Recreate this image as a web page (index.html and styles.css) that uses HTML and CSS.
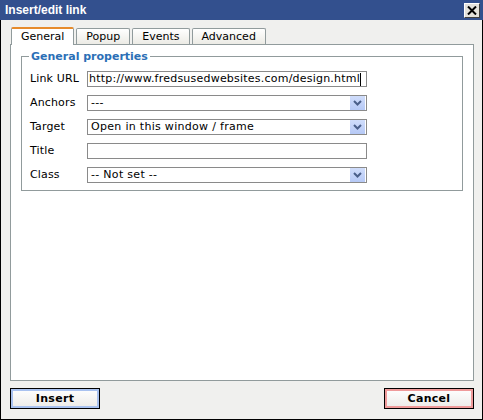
FILE: index.html
```html
<!DOCTYPE html>
<html>
<head>
<meta charset="utf-8">
<link rel="stylesheet" href="styles.css">
</head>
<body>
<div class="dialog">
  <div class="titlebar">
    <span class="title">Insert/edit link</span>
    <span class="close">
      <svg width="10" height="9" viewBox="0 0 10 9"><path d="M1 0.5 L9 8.5 M9 0.5 L1 8.5" stroke="#000" stroke-width="2"/></svg>
    </span>
  </div>
  <div class="body">
    <div class="tabs">
      <span class="tab active">General</span>
      <span class="tab">Popup</span>
      <span class="tab">Events</span>
      <span class="tab">Advanced</span>
    </div>
    <div class="panel">
      <fieldset class="props">
        <legend>General properties</legend>
        <div class="grid">
          <span class="label">Link URL</span>
          <div class="field url">http://www.fredsusedwebsites.com/design.html<span class="caret"></span></div>
          <span class="label">Anchors</span>
          <div class="field select"><span class="val">---</span><span class="arrow"><svg width="9" height="6" viewBox="0 0 9 6"><path d="M1 1 L4.5 4.5 L8 1" fill="none" stroke="#4a5f8a" stroke-width="2"/></svg></span></div>
          <span class="label">Target</span>
          <div class="field select"><span class="val">Open in this window / frame</span><span class="arrow"><svg width="9" height="6" viewBox="0 0 9 6"><path d="M1 1 L4.5 4.5 L8 1" fill="none" stroke="#4a5f8a" stroke-width="2"/></svg></span></div>
          <span class="label">Title</span>
          <div class="field"></div>
          <span class="label">Class</span>
          <div class="field select"><span class="val">-- Not set --</span><span class="arrow"><svg width="9" height="6" viewBox="0 0 9 6"><path d="M1 1 L4.5 4.5 L8 1" fill="none" stroke="#4a5f8a" stroke-width="2"/></svg></span></div>
        </div>
      </fieldset>
    </div>
    <div class="buttons">
      <span class="btn insert">Insert</span>
      <span class="btn cancel">Cancel</span>
    </div>
  </div>
</div>
</body>
</html>
```
FILE: styles.css
```css
html, body {
  margin: 0;
  padding: 0;
  background: #f0f0ee;
}
.dialog {
  width: 483px;
  height: 420px;
  display: flex;
  flex-direction: column;
  font-family: "DejaVu Sans", Verdana, sans-serif;
  font-size: 11px;
  color: #000;
}
.titlebar {
  height: 20px;
  flex: none;
  background: #33508e;
  display: flex;
  align-items: center;
  justify-content: space-between;
  padding: 0 3px 0 5px;
  box-sizing: border-box;
}
.title {
  font-family: "Liberation Sans", Arial, sans-serif;
  font-weight: bold;
  font-size: 12px;
  color: #fff;
}
.close {
  width: 16px;
  height: 15px;
  box-sizing: border-box;
  background: #e4e2dc;
  border: 1px solid;
  border-color: #fff #404040 #404040 #fff;
  display: flex;
  align-items: center;
  justify-content: center;
}
.body {
  flex: 1;
  display: flex;
  flex-direction: column;
  border: 1px solid #000;
  border-top: none;
  padding: 7px 8px 10px 9px;
  background: #f0f0ee;
}
.tabs {
  display: flex;
  align-items: flex-end;
  gap: 2px;
  height: 17px;
  position: relative;
  z-index: 1;
  padding-left: 1px;
}
.tab {
  height: 16px;
  box-sizing: border-box;
  border: 1px solid #919b9c;
  border-bottom: none;
  border-radius: 2px 2px 0 0;
  background: linear-gradient(#ffffff, #ecebe5);
  padding: 1px 9px 0 9px;
  line-height: 14px;
  color: #000;
}
.tab.active {
  height: 18px;
  margin-bottom: -1px;
  background: #fff;
  border-top: 2px solid #e68b2c;
  padding-top: 1px;
}
.panel {
  flex: 1;
  background: #fff;
  border: 1px solid #919b9c;
  padding: 5px 10px;
}
.props {
  margin: 0;
  border: 1px solid #919b9c;
  padding: 8px 7px 7px 8px;
}
.props legend {
  padding: 0 2px;
  margin-left: -1px;
  font-weight: bold;
  color: #2b6fb6;
  line-height: 13px;
}
.grid {
  display: grid;
  grid-template-columns: 57px 280px;
  grid-auto-rows: 16px;
  row-gap: 8px;
  align-items: center;
}
.label {
  line-height: 16px;
  letter-spacing: 0.15px;
}
.field {
  height: 16px;
  box-sizing: border-box;
  border: 1px solid #8a8a8a;
  background: #fff;
  padding: 0 2px;
  line-height: 14px;
  display: flex;
  align-items: center;
  white-space: nowrap;
  overflow: hidden;
}
.url {
  letter-spacing: 0.22px;
  padding-left: 1px;
}
.caret {
  display: inline-block;
  width: 1px;
  height: 13px;
  background: #000;
}
.select {
  justify-content: space-between;
  padding: 1px 1px 1px 3px;
}
.select .val {
  letter-spacing: 0.3px;
}
.arrow {
  width: 15px;
  height: 14px;
  box-sizing: border-box;
  background: linear-gradient(#d0ddfb, #b6c9f6);
  display: flex;
  align-items: center;
  justify-content: center;
}
.buttons {
  display: flex;
  justify-content: space-between;
  margin-top: 7px;
}
.btn {
  width: 90px;
  height: 21px;
  box-sizing: border-box;
  border: 1px solid #000;
  display: flex;
  align-items: center;
  justify-content: center;
  font-weight: bold;
  letter-spacing: 0.3px;
  background: linear-gradient(#ffffff, #ecebe8);
}
.insert {
  box-shadow: inset 0 0 0 2px #a9c2f0;
}
.cancel {
  box-shadow: inset 0 0 0 2px #ef9a9a;
}
```
